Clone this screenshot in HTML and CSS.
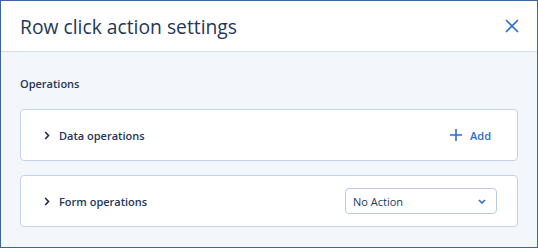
FILE: index.html
```html
<!DOCTYPE html>
<html>
<head>
<meta charset="utf-8">
<link rel="stylesheet" href="styles.css">
</head>
<body>
<div class="dialog">
  <div class="header">
    <div class="title">Row click action settings</div>
    <button class="close" aria-label="Close">
      <svg width="14" height="14" viewBox="0 0 14 14"><path d="M1 1L13 13M13 1L1 13" stroke="#2c6ecb" stroke-width="1.6" fill="none"/></svg>
    </button>
  </div>
  <div class="content">
    <div class="section-label">Operations</div>
    <div class="card">
      <div class="card-left">
        <svg class="chev" width="6" height="9" viewBox="0 0 6 9"><path d="M1.2 1L4.5 4.5L1.2 8" stroke="#1c2b44" stroke-width="1.6" fill="none"/></svg>
        <span class="card-title">Data operations</span>
      </div>
      <div class="add">
        <svg width="12" height="12" viewBox="0 0 12 12"><path d="M6 0V12M0 6H12" stroke="#2c6ecb" stroke-width="1.6" fill="none"/></svg>
        <span>Add</span>
      </div>
    </div>
    <div class="card">
      <div class="card-left">
        <svg class="chev" width="6" height="9" viewBox="0 0 6 9"><path d="M1.2 1L4.5 4.5L1.2 8" stroke="#1c2b44" stroke-width="1.6" fill="none"/></svg>
        <span class="card-title">Form operations</span>
      </div>
      <div class="select">
        <span>No Action</span>
        <svg width="8" height="5" viewBox="0 0 8 5"><path d="M1 1L4 4L7 1" stroke="#2c6ecb" stroke-width="1.6" fill="none"/></svg>
      </div>
    </div>
  </div>
</div>
</body>
</html>
```
FILE: styles.css
```css
* { box-sizing: border-box; }
html, body { margin: 0; padding: 0; }
body { font-family: "Open Sans", "Noto Sans", sans-serif; color: #243757; }
.dialog {
  width: 538px; height: 248px;
  border: 1px solid #3a65a0;
  background: #f3f6fb;
  display: flex; flex-direction: column;
}
.header {
  height: 51px;
  background: #fff;
  border-bottom: 1px solid #d3deee;
  display: flex; align-items: center; justify-content: space-between;
  padding: 0 18px 0 19px;
}
.title { font-size: 19.3px; color: #243757; }
.close { border: 0; background: none; padding: 0; width: 14px; height: 14px; display: flex; cursor: pointer; }
.content { padding: 24px 19px 0 19px; display: flex; flex-direction: column; }
.section-label { font-size: 11px; font-weight: 600; line-height: 15px; color: #243757; margin-bottom: 18px; }
.card {
  height: 52px;
  background: #fff;
  border: 1px solid #c3d3ea;
  border-radius: 4px;
  display: flex; align-items: center; justify-content: space-between;
  padding: 0 20px 0 23px;
  margin-bottom: 14px;
}
.card-left { display: flex; align-items: center; }
.chev { margin-right: 9px; }
.card-title { font-size: 11px; font-weight: 600; color: #243757; }
.add { display: flex; align-items: center; gap: 8px; color: #2c6ecb; font-size: 11px; font-weight: 600; margin-right: 6px; }
.select {
  width: 152px; height: 26px;
  border: 1px solid #b8cbe6;
  border-radius: 4px;
  display: flex; align-items: center; justify-content: space-between;
  padding: 0 10px 0 7px;
  font-size: 11px; color: #243757;
}
```
